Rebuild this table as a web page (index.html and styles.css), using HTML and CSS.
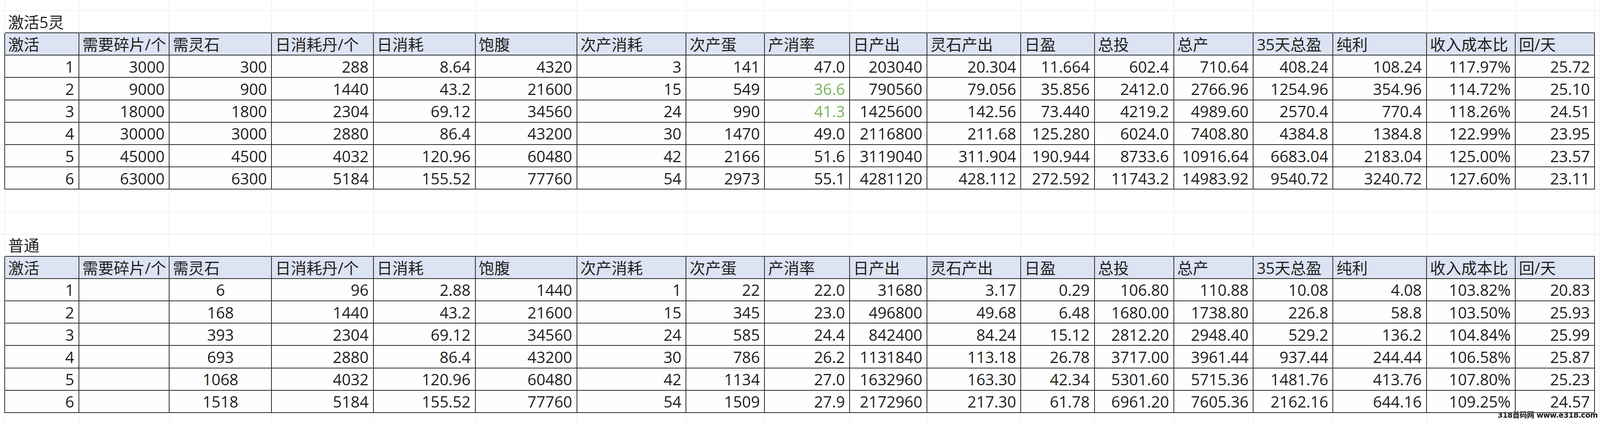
FILE: index.html
```html
<!DOCTYPE html>
<html lang="zh">
<head>
<meta charset="utf-8">
<title>激活5灵 / 普通</title>
<link rel="stylesheet" href="styles.css">
</head>
<body>
<div class="sheet">
<div class="row r0"><div class="x gut"></div><div class="x"></div><div class="x"></div><div class="x"></div><div class="x"></div><div class="x"></div><div class="x"></div><div class="x"></div><div class="x"></div><div class="x"></div><div class="x"></div><div class="x"></div><div class="x"></div><div class="x"></div><div class="x"></div><div class="x"></div><div class="x"></div><div class="x"></div><div class="x"></div><div class="x gut"></div></div>

<div class="row r"><div class="x gut"></div><div class="x db title">激活5灵</div><div class="x db"></div><div class="x db"></div><div class="x db"></div><div class="x db"></div><div class="x db"></div><div class="x db"></div><div class="x db"></div><div class="x db"></div><div class="x db"></div><div class="x db"></div><div class="x db"></div><div class="x db"></div><div class="x db"></div><div class="x db"></div><div class="x db"></div><div class="x db"></div><div class="x db"></div><div class="x gut"></div></div>
<div class="row r"><div class="x gut dr"></div><div class="x c h">激活</div><div class="x c h">需要碎片/个</div><div class="x c h">需灵石</div><div class="x c h">日消耗丹/个</div><div class="x c h">日消耗</div><div class="x c h">饱腹</div><div class="x c h">次产消耗</div><div class="x c h">次产蛋</div><div class="x c h">产消率</div><div class="x c h">日产出</div><div class="x c h">灵石产出</div><div class="x c h">日盈</div><div class="x c h">总投</div><div class="x c h">总产</div><div class="x c h">35天总盈</div><div class="x c h">纯利</div><div class="x c h">收入成本比</div><div class="x c h">回/天</div><div class="x gut"></div></div>
<div class="row r"><div class="x gut dr"></div><div class="x c">1</div><div class="x c">3000</div><div class="x c">300</div><div class="x c">288</div><div class="x c">8.64</div><div class="x c">4320</div><div class="x c">3</div><div class="x c">141</div><div class="x c">47.0</div><div class="x c">203040</div><div class="x c">20.304</div><div class="x c">11.664</div><div class="x c">602.4</div><div class="x c">710.64</div><div class="x c">408.24</div><div class="x c">108.24</div><div class="x c">117.97%</div><div class="x c">25.72</div><div class="x gut"></div></div>
<div class="row r"><div class="x gut dr"></div><div class="x c">2</div><div class="x c">9000</div><div class="x c">900</div><div class="x c">1440</div><div class="x c">43.2</div><div class="x c">21600</div><div class="x c">15</div><div class="x c">549</div><div class="x c green">36.6</div><div class="x c">790560</div><div class="x c">79.056</div><div class="x c">35.856</div><div class="x c">2412.0</div><div class="x c">2766.96</div><div class="x c">1254.96</div><div class="x c">354.96</div><div class="x c">114.72%</div><div class="x c">25.10</div><div class="x gut"></div></div>
<div class="row r"><div class="x gut dr"></div><div class="x c">3</div><div class="x c">18000</div><div class="x c">1800</div><div class="x c">2304</div><div class="x c">69.12</div><div class="x c">34560</div><div class="x c">24</div><div class="x c">990</div><div class="x c green">41.3</div><div class="x c">1425600</div><div class="x c">142.56</div><div class="x c">73.440</div><div class="x c">4219.2</div><div class="x c">4989.60</div><div class="x c">2570.4</div><div class="x c">770.4</div><div class="x c">118.26%</div><div class="x c">24.51</div><div class="x gut"></div></div>
<div class="row r"><div class="x gut dr"></div><div class="x c">4</div><div class="x c">30000</div><div class="x c">3000</div><div class="x c">2880</div><div class="x c">86.4</div><div class="x c">43200</div><div class="x c">30</div><div class="x c">1470</div><div class="x c">49.0</div><div class="x c">2116800</div><div class="x c">211.68</div><div class="x c">125.280</div><div class="x c">6024.0</div><div class="x c">7408.80</div><div class="x c">4384.8</div><div class="x c">1384.8</div><div class="x c">122.99%</div><div class="x c">23.95</div><div class="x gut"></div></div>
<div class="row r"><div class="x gut dr"></div><div class="x c">5</div><div class="x c">45000</div><div class="x c">4500</div><div class="x c">4032</div><div class="x c">120.96</div><div class="x c">60480</div><div class="x c">42</div><div class="x c">2166</div><div class="x c">51.6</div><div class="x c">3119040</div><div class="x c">311.904</div><div class="x c">190.944</div><div class="x c">8733.6</div><div class="x c">10916.64</div><div class="x c">6683.04</div><div class="x c">2183.04</div><div class="x c">125.00%</div><div class="x c">23.57</div><div class="x gut"></div></div>
<div class="row r"><div class="x gut dr"></div><div class="x c">6</div><div class="x c">63000</div><div class="x c">6300</div><div class="x c">5184</div><div class="x c">155.52</div><div class="x c">77760</div><div class="x c">54</div><div class="x c">2973</div><div class="x c">55.1</div><div class="x c">4281120</div><div class="x c">428.112</div><div class="x c">272.592</div><div class="x c">11743.2</div><div class="x c">14983.92</div><div class="x c">9540.72</div><div class="x c">3240.72</div><div class="x c">127.60%</div><div class="x c">23.11</div><div class="x gut"></div></div>

<div class="row r"><div class="x gut"></div><div class="x"></div><div class="x"></div><div class="x"></div><div class="x"></div><div class="x"></div><div class="x"></div><div class="x"></div><div class="x"></div><div class="x"></div><div class="x"></div><div class="x"></div><div class="x"></div><div class="x"></div><div class="x"></div><div class="x"></div><div class="x"></div><div class="x"></div><div class="x"></div><div class="x gut"></div></div>
<div class="row r"><div class="x gut"></div><div class="x"></div><div class="x"></div><div class="x"></div><div class="x"></div><div class="x"></div><div class="x"></div><div class="x"></div><div class="x"></div><div class="x"></div><div class="x"></div><div class="x"></div><div class="x"></div><div class="x"></div><div class="x"></div><div class="x"></div><div class="x"></div><div class="x"></div><div class="x"></div><div class="x gut"></div></div>

<div class="row r"><div class="x gut"></div><div class="x db title">普通</div><div class="x db"></div><div class="x db"></div><div class="x db"></div><div class="x db"></div><div class="x db"></div><div class="x db"></div><div class="x db"></div><div class="x db"></div><div class="x db"></div><div class="x db"></div><div class="x db"></div><div class="x db"></div><div class="x db"></div><div class="x db"></div><div class="x db"></div><div class="x db"></div><div class="x db"></div><div class="x gut"></div></div>
<div class="row r"><div class="x gut dr"></div><div class="x c h">激活</div><div class="x c h">需要碎片/个</div><div class="x c h">需灵石</div><div class="x c h">日消耗丹/个</div><div class="x c h">日消耗</div><div class="x c h">饱腹</div><div class="x c h">次产消耗</div><div class="x c h">次产蛋</div><div class="x c h">产消率</div><div class="x c h">日产出</div><div class="x c h">灵石产出</div><div class="x c h">日盈</div><div class="x c h">总投</div><div class="x c h">总产</div><div class="x c h">35天总盈</div><div class="x c h">纯利</div><div class="x c h">收入成本比</div><div class="x c h">回/天</div><div class="x gut"></div></div>
<div class="row r"><div class="x gut dr"></div><div class="x c">1</div><div class="x c"></div><div class="x c ctr">6</div><div class="x c">96</div><div class="x c">2.88</div><div class="x c">1440</div><div class="x c">1</div><div class="x c">22</div><div class="x c">22.0</div><div class="x c">31680</div><div class="x c">3.17</div><div class="x c">0.29</div><div class="x c">106.80</div><div class="x c">110.88</div><div class="x c">10.08</div><div class="x c">4.08</div><div class="x c">103.82%</div><div class="x c">20.83</div><div class="x gut"></div></div>
<div class="row r"><div class="x gut dr"></div><div class="x c">2</div><div class="x c"></div><div class="x c ctr">168</div><div class="x c">1440</div><div class="x c">43.2</div><div class="x c">21600</div><div class="x c">15</div><div class="x c">345</div><div class="x c">23.0</div><div class="x c">496800</div><div class="x c">49.68</div><div class="x c">6.48</div><div class="x c">1680.00</div><div class="x c">1738.80</div><div class="x c">226.8</div><div class="x c">58.8</div><div class="x c">103.50%</div><div class="x c">25.93</div><div class="x gut"></div></div>
<div class="row r"><div class="x gut dr"></div><div class="x c">3</div><div class="x c"></div><div class="x c ctr">393</div><div class="x c">2304</div><div class="x c">69.12</div><div class="x c">34560</div><div class="x c">24</div><div class="x c">585</div><div class="x c">24.4</div><div class="x c">842400</div><div class="x c">84.24</div><div class="x c">15.12</div><div class="x c">2812.20</div><div class="x c">2948.40</div><div class="x c">529.2</div><div class="x c">136.2</div><div class="x c">104.84%</div><div class="x c">25.99</div><div class="x gut"></div></div>
<div class="row r"><div class="x gut dr"></div><div class="x c">4</div><div class="x c"></div><div class="x c ctr">693</div><div class="x c">2880</div><div class="x c">86.4</div><div class="x c">43200</div><div class="x c">30</div><div class="x c">786</div><div class="x c">26.2</div><div class="x c">1131840</div><div class="x c">113.18</div><div class="x c">26.78</div><div class="x c">3717.00</div><div class="x c">3961.44</div><div class="x c">937.44</div><div class="x c">244.44</div><div class="x c">106.58%</div><div class="x c">25.87</div><div class="x gut"></div></div>
<div class="row r"><div class="x gut dr"></div><div class="x c">5</div><div class="x c"></div><div class="x c ctr">1068</div><div class="x c">4032</div><div class="x c">120.96</div><div class="x c">60480</div><div class="x c">42</div><div class="x c">1134</div><div class="x c">27.0</div><div class="x c">1632960</div><div class="x c">163.30</div><div class="x c">42.34</div><div class="x c">5301.60</div><div class="x c">5715.36</div><div class="x c">1481.76</div><div class="x c">413.76</div><div class="x c">107.80%</div><div class="x c">25.23</div><div class="x gut"></div></div>
<div class="row r"><div class="x gut dr"></div><div class="x c">6</div><div class="x c"></div><div class="x c ctr">1518</div><div class="x c">5184</div><div class="x c">155.52</div><div class="x c">77760</div><div class="x c">54</div><div class="x c">1509</div><div class="x c">27.9</div><div class="x c">2172960</div><div class="x c">217.30</div><div class="x c">61.78</div><div class="x c">6961.20</div><div class="x c">7605.36</div><div class="x c">2162.16</div><div class="x c">644.16</div><div class="x c">109.25%</div><div class="x c">24.57</div><div class="x gut"></div></div>

<div class="row r"><div class="x gut"></div><div class="x"></div><div class="x"></div><div class="x"></div><div class="x"></div><div class="x"></div><div class="x"></div><div class="x"></div><div class="x"></div><div class="x"></div><div class="x"></div><div class="x"></div><div class="x"></div><div class="x"></div><div class="x"></div><div class="x"></div><div class="x"></div><div class="x"></div><div class="x"></div><div class="x gut"></div></div>
</div>
<div class="wm">318首码网 www.e318.com</div>
</body>
</html>
```
FILE: styles.css
```css
html, body {
  margin: 0;
  padding: 0;
  background: #ffffff;
}
body {
  width: 100%;
  height: 1080px;
  overflow: hidden;
  position: relative;
  font-family: "Open Sans", "Noto Sans CJK SC", sans-serif;
  font-size: 40px;
  color: #1f1f1f;
}
.sheet {
  display: flex;
  flex-direction: column;
  width: 100%;
}
.row {
  display: grid;
  grid-template-columns: 13fr 193fr 235fr 266fr 264fr 265fr 264fr 284fr 204fr 221fr 201fr 244fr 191fr 206fr 207fr 207fr 243fr 231fr 206fr 13fr;
  flex: none;
}
.r0 { height: 28px; }
.r { height: 57.17px; }

.x {
  box-sizing: border-box;
  border-right: 1px solid #e6e6e6;
  border-bottom: 1px solid #e6e6e6;
  padding: 0 11px 0 8px;
  white-space: nowrap;
  overflow: visible;
  display: flex;
  align-items: center;
  line-height: 1;
  min-width: 0;
}
.x.gut {
  padding: 0;
}
.x.dr {
  border-right: 2px solid #2c2c2c;
}
.x.db {
  border-bottom: 2px solid #2c2c2c;
}
.x.c {
  border-right: 2px solid #2c2c2c;
  border-bottom: 2px solid #2c2c2c;
  justify-content: flex-end;
  background: #fefefe;
  padding-top: 2px;
}
.x.h {
  background: #dce3f3;
  justify-content: flex-start;
  padding-top: 3px;
}
.x.ctr {
  justify-content: center;
  padding-left: 0;
  padding-right: 0;
}
.x.title {
  padding-top: 2px;
}
.green {
  color: #7db35c;
}
.wm {
  position: absolute;
  right: 6px;
  bottom: 8px;
  font-family: "DejaVu Sans", "Noto Sans CJK SC", sans-serif;
  font-weight: bold;
  font-size: 19px;
  line-height: 1;
  color: #1a1a1a;
  text-shadow: 0 0 2px #fff, 0 0 2px #fff;
  letter-spacing: -0.5px;
}
```
